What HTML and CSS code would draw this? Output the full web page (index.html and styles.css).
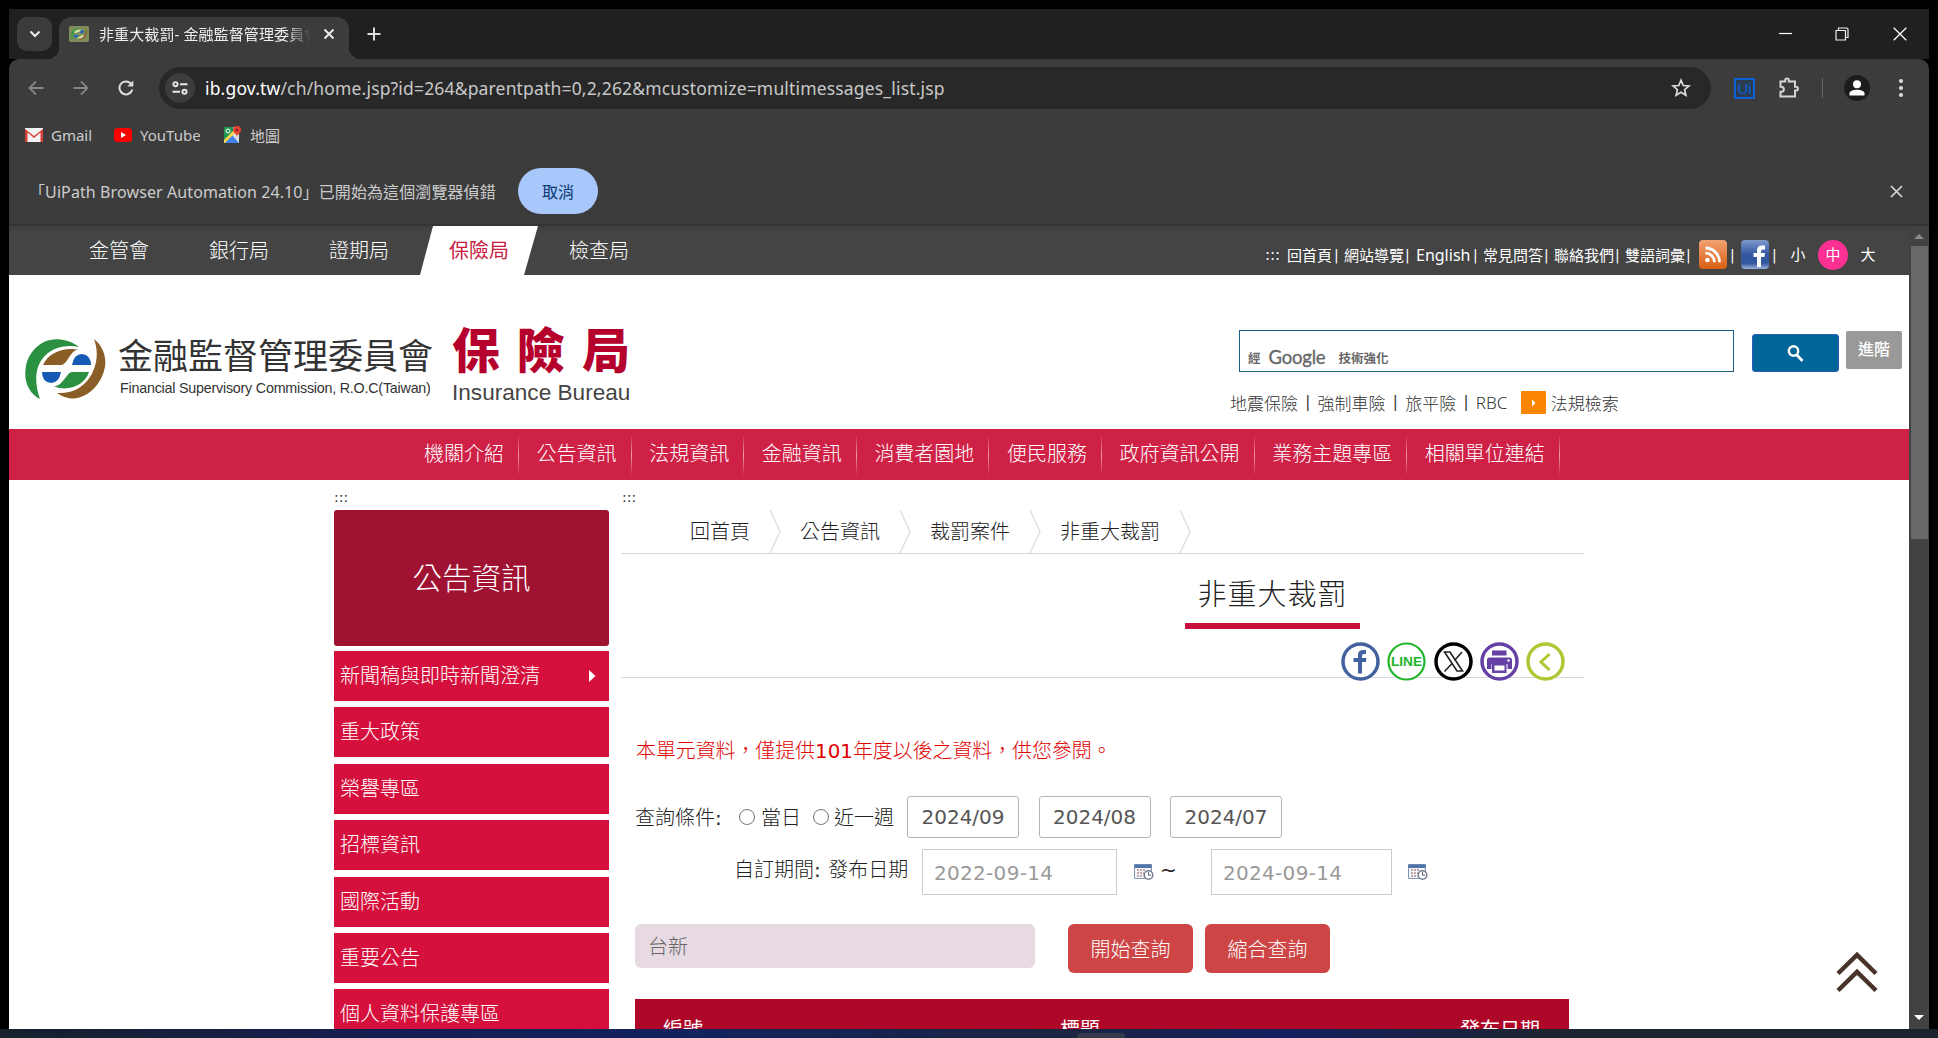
FILE: index.html
```html
<!DOCTYPE html>
<html lang="zh-TW">
<head>
<meta charset="utf-8">
<title>非重大裁罰- 金融監督管理委員會保險局</title>
<link rel="stylesheet" href="styles.css">
</head>
<body>
<div class="window">
  <header class="tabstrip">
    <div class="tab-search"><svg width="12" height="8" viewBox="0 0 12 8"><path d="M1.5 1.5 6 6l4.5-4.5" fill="none" stroke="#e8e8e8" stroke-width="2.2"/></svg></div>
    <div class="tab">
      <svg class="favicon" width="20" height="16" viewBox="0 0 20 16"><rect width="20" height="16" rx="2" fill="#7f8d5c"/><path d="M3.500 14C0 8 4 1 11 2.500 6 4 3.500 8 3.500 14Z" fill="#2f9a4a"/><path d="M17 2.500c3 6-2 12-8 11.500 5-2 8-5 8-11.500Z" fill="#8a5a26"/><path d="M5 7c1-4 5-4 8-3-3 1-3 3-8 3ZM15 9c-1 4-4 4-8 3 4 0 3-3 8-3Z" fill="#cfe0a0"/><path d="M10.500 7q1-3 3-3 2 .5 1.500 3zM5 9h4.500q-1 3-2.500 3-2 0-2-3z" fill="#1f66c0"/></svg>
      <span class="tab-title">非重大裁罰- 金融監督管理委員會</span>
      <svg class="tab-close" width="12" height="12" viewBox="0 0 12 12"><path d="m1.500 1.500 9 9m0-9-9 9" stroke="#ececec" stroke-width="1.900"/></svg>
    </div>
    <svg class="new-tab" width="14" height="14" viewBox="0 0 14 14"><path d="M7 .5v13M.5 7h13" stroke="#ddd" stroke-width="2"/></svg>
    <div class="win-controls">
      <svg width="14" height="14" viewBox="0 0 14 14"><path d="M0 6.500h13" stroke="#fff" stroke-width="1.200"/></svg>
      <svg width="14" height="14" viewBox="0 0 14 14"><path d="M1 3.500h9.500v9.500H1zM3.500 3.500V1h8q1.500 0 1.500 1.500v8h-2.500" fill="none" stroke="#eee" stroke-width="1.200"/></svg>
      <svg width="14" height="14" viewBox="0 0 14 14"><path d="m.7.700 12.600 12.600m0-12.600L.7 13.300" stroke="#fff" stroke-width="1.300"/></svg>
    </div>
  </header>

  <div class="toolbar">
    <svg class="nav-back" width="16" height="16" viewBox="0 0 16 16"><path d="M15.500 8H2M8 1.500 1.500 8 8 14.500" fill="none" stroke="#858585" stroke-width="1.800"/></svg>
    <svg class="nav-fwd" width="16" height="16" viewBox="0 0 16 16"><path d="M.5 8H14M8 1.500 14.500 8 8 14.500" fill="none" stroke="#858585" stroke-width="1.800"/></svg>
    <svg class="nav-reload" width="16" height="16" viewBox="0 0 16 16"><path d="M14.300 9.500A6.500 6.500 0 1 1 12.800 3.500L14.500 5.400" fill="none" stroke="#ddd" stroke-width="2"/><path d="M15.300.500v6h-6z" fill="#ddd"/></svg>
    <div class="omnibox">
      <span class="site-info"><svg width="16" height="14" viewBox="0 0 16 14"><g fill="none" stroke="#e8e8e8" stroke-width="1.900"><circle cx="3.500" cy="3.200" r="2.100"/><circle cx="12.500" cy="10.800" r="2.100"/><path d="M8 3.200h7.500M.5 10.800H8"/></g></svg></span>
      <span class="url"><b>ib.gov.tw</b>/ch/home.jsp?id=264&amp;parentpath=0,2,262&amp;mcustomize=multimessages_list.jsp</span>
      <svg class="star" width="20" height="20" viewBox="0 0 20 20"><path d="m10 2.200 2.200 5.300 5.700.5-4.300 3.700 1.300 5.600L10 14.300l-4.900 3 1.300-5.600L2.100 8l5.700-.5z" fill="none" stroke="#ddd" stroke-width="1.700"/></svg>
    </div>
    <div class="ext">Ui</div>
    <svg class="puzzle" width="22" height="22" viewBox="0 0 22 22"><path d="M2.500 4.500h4.700V3.400a1.800 1.800 0 0 1 3.600 0v1.100H17v5.300h1a1.900 1.900 0 0 1 0 3.800h-1v6H2.500v-4.800h.8a2.500 2.500 0 0 0 0-5.100h-.8z" fill="none" stroke="#d5d5d5" stroke-width="2"/></svg>
    <i class="tool-sep"></i>
    <span class="avatar"><svg width="16" height="16" viewBox="0 0 16 16"><circle cx="8" cy="4.200" r="4" fill="#fff"/><path d="M.5 15.500v-2.300C.5 8.500 15.500 8.500 15.500 13.200v2.300z" fill="#fff"/></svg></span>
    <svg class="dots" width="4" height="18" viewBox="0 0 4 18"><g fill="#ddd"><circle cx="2" cy="2" r="2"/><circle cx="2" cy="9" r="2"/><circle cx="2" cy="16" r="2"/></g></svg>
  </div>

  <div class="bookmarks">
    <svg width="18" height="14" viewBox="0 0 18 14"><path d="M0 0h18v14H0z" fill="#f2f2f2"/><path d="M0 14V1l9 7 9-7v13h-2.500V4.500L9 10 2.500 4.500V14z" fill="#d93f35"/></svg>
    <span class="bm-gmail">Gmail</span>
    <svg width="18" height="14" viewBox="0 0 18 14"><rect width="18" height="14" rx="3.500" fill="#f00"/><path d="m7 4 5 3-5 3z" fill="#fff"/></svg>
    <span class="bm-yt">YouTube</span>
    <svg width="19" height="18" viewBox="0 0 19 18"><path d="M1 1h15v16H1z" fill="#ddd"/><path d="M1 1h9v5L1 15z" fill="#219653"/><path d="m1 17 8-8 7 8z" fill="#3f82ed"/><path d="m1 14 13-13 2 2L2 17H1z" fill="#f9d64a"/><path d="m3 17 6-6 6 6z" fill="#3f82ed"/><circle cx="5" cy="5" r="2" fill="none" stroke="#fff"/><path d="M14 11c0-3-4-4-4-7a4 4 0 0 1 8 0c0 3-4 4-4 7z" fill="#e74133"/><circle cx="14" cy="4" r="1.300" fill="#80201a"/></svg>
    <span class="bm-map">地圖</span>
  </div>

  <div class="infobar">
    <span class="info-text">「UiPath Browser Automation 24.10」已開始為這個瀏覽器偵錯</span>
    <button class="cancel">取消</button>
    <svg class="info-close" width="13" height="13" viewBox="0 0 13 13"><path d="m1 1 11 11m0-11L1 12" stroke="#d8d8d8" stroke-width="1.700"/></svg>
  </div>

  <div class="viewport">
    <main class="page">
      <div class="topbar">
        <nav class="bureaus"><a>金管會</a><a>銀行局</a><a>證期局</a><a class="current">保險局</a><a>檢查局</a></nav>
        <div class="toplinks">
          <span class="t-dots">:::</span><a class="l3">回首頁</a><i>|</i><a>網站導覽</a><i>|</i><a class="en">English</a><i>|</i><a>常見問答</a><i>|</i><a>聯絡我們</a><i>|</i><a>雙語詞彙</a><i>|</i>
          <svg class="rss" width="28" height="29" viewBox="0 0 28 29"><defs><linearGradient id="o" x2="0" y2="1"><stop stop-color="#f2a274"/><stop offset="1" stop-color="#d95f14"/></linearGradient></defs><rect width="28" height="29" rx="4" fill="url(#o)"/><circle cx="8.500" cy="20" r="2.300" fill="#fff"/><path d="M6.500 13.200a9 9 0 0 1 9 9M6.500 8a14 14 0 0 1 14 14.200" fill="none" stroke="#fff" stroke-width="2.800"/></svg>
          <i>|</i>
          <svg class="fb" width="28" height="29" viewBox="0 0 28 29"><defs><linearGradient id="b" x2="0" y2="1"><stop stop-color="#7d98cc"/><stop offset=".5" stop-color="#3358a0"/><stop offset=".8" stop-color="#3358a0"/><stop offset="1" stop-color="#9db4dd"/></linearGradient></defs><rect width="28" height="29" rx="4" fill="url(#b)"/><path d="M16 27V17h-3.500v-4H16v-2.500q0-5 5-5h3v4h-2q-2 0-2 2V13h4l-.6 4H20v10z" fill="#fff"/></svg>
          <i>|</i>
          <a class="size">小</a><a class="size on">中</a><a class="size">大</a>
        </div>
      </div>

      <div class="masthead">
        <svg class="emblem" width="81" height="60" viewBox="0 0 81 60"><path d="M15 60C5 55-1 44 .5 31 2 13 16 .5 31 .3 41 0 49 4 54 8 40 5 26 9 18 19 9 30 10 46 15 60Z" fill="#2b9140"/><path d="M69 0C78 7 83 20 79 32 74 49 60 60 46 59.500 41 59 36 57 32 54 46 55 58 49 65 38 72 27 74 13 69 0Z" fill="#8b5e28"/><path d="M18 26C23 14 38 8 53 10.500 45 12 43 24 37 26Z" fill="#8b5e28"/><path d="M64 33C60 46 44 53 29 47.500 39 46 41 34 47 33Z" fill="#2b9140"/><path d="M47 26Q49 15 57 15 66 16 66 26ZM17 33H36Q34 44 26 44 17 43 17 33Z" fill="#155ab5"/></svg>
        <div class="brand"><div class="brand-zh">金融監督管理委員會</div><div class="brand-en">Financial Supervisory Commission, R.O.C(Taiwan)</div></div>
        <div class="bureau"><div class="bureau-zh">保險局</div><div class="bureau-en">Insurance Bureau</div></div>
        <div class="search">
          <div class="search-row">
            <div class="search-box"><span class="g-small">經</span><span class="g-logo">Google</span><span class="g-small">技術強化</span></div>
            <div class="search-btn"><svg width="17" height="17" viewBox="0 0 17 17"><circle cx="6.500" cy="6" r="4.700" fill="none" stroke="#fff" stroke-width="2.400"/><path d="m10 10 5.500 6" stroke="#fff" stroke-width="2.700"/></svg></div>
            <div class="advanced">進階</div>
          </div>
          <div class="hotlinks"><a>地震保險</a><i>|</i><a>強制車險</a><i>|</i><a>旅平險</a><i>|</i><a class="rbc">RBC</a><svg width="25" height="23" viewBox="0 0 25 23"><rect width="25" height="23" rx="1" fill="#fb8500"/><path d="M11 8.500 14.500 12 11 15.500z" fill="#fff"/></svg><a>法規檢索</a></div>
        </div>
      </div>

      <nav class="mainnav"><a>機關介紹</a><a>公告資訊</a><a>法規資訊</a><a>金融資訊</a><a>消費者園地</a><a>便民服務</a><a>政府資訊公開</a><a>業務主題專區</a><a>相關單位連結</a></nav>

      <div class="content">
        <aside class="side">
          <div class="anchor">:::</div>
          <div class="side-title">公告資訊</div>
          <ul>
            <li>新聞稿與即時新聞澄清<svg width="7" height="12" viewBox="0 0 7 12"><path d="m0 0 6.500 6L0 12z" fill="#fff"/></svg></li>
            <li>重大政策</li><li>榮譽專區</li><li>招標資訊</li><li>國際活動</li><li>重要公告</li><li>個人資料保護專區</li>
          </ul>
        </aside>
        <section class="main">
          <div class="anchor">:::</div>
          <div class="crumbs">
            <a>回首頁</a><svg width="12" height="43" viewBox="0 0 12 43"><path d="M1 0 11 21.500 1 43" fill="none" stroke="#e0e0e0" stroke-width="1.500"/></svg>
            <a>公告資訊</a><svg width="12" height="43" viewBox="0 0 12 43"><path d="M1 0 11 21.500 1 43" fill="none" stroke="#e0e0e0" stroke-width="1.500"/></svg>
            <a>裁罰案件</a><svg width="12" height="43" viewBox="0 0 12 43"><path d="M1 0 11 21.500 1 43" fill="none" stroke="#e0e0e0" stroke-width="1.500"/></svg>
            <a>非重大裁罰</a><svg width="12" height="43" viewBox="0 0 12 43"><path d="M1 0 11 21.500 1 43" fill="none" stroke="#e0e0e0" stroke-width="1.500"/></svg>
          </div>
          <div class="heading">
            <h1>非重大裁罰</h1>
            <div class="share">
              <svg width="39" height="39" viewBox="0 0 39 39"><circle cx="19.500" cy="19.500" r="17.500" fill="#fff" stroke="#43619f" stroke-width="3.500"/><path d="M17 31.500V20h-4.500v-4H17v-3q0-5 5.500-5H25v4h-2.200q-1.800 0-1.800 2v2h4.500l-.6 4H21v11.500z" fill="#43619f"/></svg>
              <svg class="s-line" width="39" height="39" viewBox="0 0 39 39"><circle cx="19.500" cy="19.500" r="18" fill="#fff" stroke="#22b52a" stroke-width="2.200"/><text x="19.500" y="24" text-anchor="middle" textLength="31" lengthAdjust="spacingAndGlyphs">LINE</text></svg>
              <svg class="s-x" width="39" height="39" viewBox="0 0 39 39"><circle cx="19.500" cy="19.500" r="17.500" fill="#fff" stroke="#000" stroke-width="3.500"/><path d="M10.500 10h5.500l12.500 19H23zM28 10l-7.500 8.500M18 21.500 10.500 29.500" fill="none" stroke="#222" stroke-width="1.600"/></svg>
              <svg class="s-print" width="39" height="39" viewBox="0 0 39 39"><circle cx="19.500" cy="19.500" r="17.500" fill="#fff" stroke="#6541a5" stroke-width="3.500"/><path d="M12 8.500h14.500v5H12zM9.500 15.500h20q2.500 0 2.500 2.500v9h-4.500v-5h-16v5H7v-9q0-2.500 2.500-2.500zM12 21.500h14.500v9.500H12z" fill="#6541a5"/><path d="M14.500 23.500h10v5h-10z" fill="#fff"/><circle cx="28.500" cy="18.500" r="1.200" fill="#fff"/></svg>
              <svg class="s-back" width="39" height="39" viewBox="0 0 39 39"><circle cx="19.500" cy="19.500" r="17.500" fill="#fff" stroke="#b0c632" stroke-width="3.500"/><path d="m23.500 12-8.500 8 8.500 8" fill="none" stroke="#b0c632" stroke-width="3"/></svg>
            </div>
          </div>
          <p class="notice">本單元資料，僅提供<b>101</b>年度以後之資料，供您參閱。</p>
          <div class="row quick"><span class="lbl">查詢條件<em>:</em></span><i class="radio"></i><span class="r1">當日</span><i class="radio"></i><span class="r2">近一週</span><button>2024/09</button><button>2024/08</button><button>2024/07</button></div>
          <div class="row period"><span class="plabel">自訂期間<em>:</em> 發布日期</span><div class="date d1">2022-09-14</div>
            <svg class="cal" width="20" height="17" viewBox="0 0 20 17"><path d="M.5.500h17v14H.5z" fill="#f4f6fb" stroke="#8495b5"/><path d="M.5.500h17v3.500H.5z" fill="#4e74aa"/><path d="M3 6h9M3 9h7M3 12h6" stroke="#b58c8c" stroke-width="1.300" stroke-dasharray="2 1"/><circle cx="14.500" cy="11" r="4.300" fill="#fff" stroke="#777f90" stroke-width="1.600"/><path d="M14.500 8v3.200H17" fill="none" stroke="#556"/></svg>
            <span class="tilde">~</span><div class="date d2">2024-09-14</div>
            <svg class="cal" width="20" height="17" viewBox="0 0 20 17"><path d="M.5.500h17v14H.5z" fill="#f4f6fb" stroke="#8495b5"/><path d="M.5.500h17v3.500H.5z" fill="#4e74aa"/><path d="M3 6h9M3 9h7M3 12h6" stroke="#b58c8c" stroke-width="1.300" stroke-dasharray="2 1"/><circle cx="14.500" cy="11" r="4.300" fill="#fff" stroke="#777f90" stroke-width="1.600"/><path d="M14.500 8v3.200H17" fill="none" stroke="#556"/></svg>
          </div>
          <div class="row submit"><div class="keyword">台新</div><button>開始查詢</button><button>縮合查詢</button></div>
          <div class="thead"><span>編號</span><span>標題</span><span>發布日期</span></div>
        </section>
      </div>
      <svg class="to-top" width="42" height="42" viewBox="0 0 42 42"><path d="M2 22.500 21 4l19 18.500M2 39.500 21 21l19 18.500" fill="none" stroke="#4a332b" stroke-width="4.500"/></svg>
    </main>
    <div class="scrollbar"><svg width="10" height="5" viewBox="0 0 10 5"><path d="M5 0l5 5H0z" fill="#8c8c8c"/></svg><div class="thumb"></div><svg width="10" height="5" viewBox="0 0 10 5"><path d="M0 0h10L5 5z" fill="#fff"/></svg></div>
  </div>
</div>
<div class="taskbar"><i></i></div>
</body>
</html>
```
FILE: styles.css
```css
* { box-sizing: border-box; }
body { margin: 0; width: 1938px; height: 1038px; overflow: hidden; background: #000; font-family: "Noto Sans", "Noto Sans CJK TC", sans-serif; font-weight: 400; }
svg { display: block; flex: none; }
i, em { font-style: normal; }
button { font: inherit; border: 0; padding: 0; margin: 0; }
.window { margin: 0 9px; padding-top: 9px; height: 1029px; display: flex; flex-direction: column; background: #000; overflow: hidden; }
.window span, .window a { white-space: nowrap; }

/* browser chrome */
.tabstrip { height: 50px; flex: none; background: #202020; display: flex; align-items: flex-start; }
.tab-search { width: 35px; height: 34px; margin: 8px 0 0 8px; border-radius: 10px; background: #3b3b3b; display: flex; align-items: center; justify-content: center; }
.tab { position: relative; width: 290px; height: 42px; margin: 8px 0 0 7px; background: #3c3c3c; border-radius: 12px 12px 0 0; display: flex; align-items: flex-start; }
.tab::before, .tab::after { content: ""; position: absolute; bottom: 0; width: 12px; height: 12px; }
.tab::before { left: -12px; background: radial-gradient(circle at 0 0, transparent 12px, #3c3c3c 12.500px); }
.tab::after { right: -12px; background: radial-gradient(circle at 100% 0, transparent 12px, #3c3c3c 12.500px); }
.favicon { margin: 9px 0 0 10px; }
.tab-title { margin: 5px 0 0 10px; width: 211px; overflow: hidden; font-size: 15px; line-height: 25px; letter-spacing: .1px; color: #eee; -webkit-mask-image: linear-gradient(90deg, #000 187px, transparent 211px); }
.tab-close { margin: 11px 0 0 13px; }
.new-tab { margin: 18px 0 0 18px; }
.win-controls { margin: 18px 22px 0 auto; display: flex; gap: 42px; }
.win-controls svg:last-child { margin-left: 2px; }
.toolbar { height: 58px; flex: none; background: #3c3c3c; border-radius: 10px 10px 0 0; display: flex; align-items: center; }
.nav-back { margin-left: 19px; }
.nav-fwd, .nav-reload { margin-left: 29px; }
.omnibox { width: 1552px; height: 42px; margin-left: 25px; border-radius: 21px; background: #282828; display: flex; align-items: center; }
.site-info { width: 30px; height: 30px; margin-left: 6px; border-radius: 50%; background: #3c3c3c; display: flex; align-items: center; justify-content: center; }
.url { margin-left: 10px; font-size: 17.500px; letter-spacing: .165px; color: #c8c8c8; }
.url b { font-weight: 400; color: #fff; }
.star { margin: 0 20px 0 auto; }
.ext { width: 21px; height: 21px; margin-left: 23px; border: 2px solid #0b62d6; color: #0b62d6; background: #2b3c50; font: 15px/18px "Liberation Sans", sans-serif; text-align: center; }
.puzzle { margin-left: 23px; }
.tool-sep { width: 1px; height: 20px; margin-left: 22px; background: #666; }
.avatar { width: 26px; height: 26px; margin-left: 21px; border-radius: 50%; background: #1c1c1c; display: flex; align-items: center; justify-content: center; }
.dots { margin-left: 29px; }
.bookmarks { height: 38px; flex: none; background: #3c3c3c; display: flex; align-items: center; padding: 0 0 2px 16px; font-size: 15px; color: #ccc; }
.bookmarks span { margin-left: 8px; }
.bm-gmail { width: 63px; }
.bm-yt { width: 83px; }
.infobar { height: 71px; flex: none; background: #3c3c3c; border-bottom: 2px solid #343434; display: flex; align-items: center; padding-top: 3px; font-size: 16px; color: #ccc; }
.info-text { width: 490px; margin-left: 20px; letter-spacing: .1px; }
.cancel { width: 80px; height: 46px; margin-left: -1px; border-radius: 23px; background: #a8c7fa; color: #0b3a75; font-size: 16px; }
.info-close { margin: 0 26px 0 auto; }

/* page */
.viewport { flex: 1; min-height: 0; display: flex; }
.page { position: relative; width: 1900px; height: 803px; overflow: hidden; background: #fff; font-family: "DejaVu Sans", "Noto Sans CJK TC", sans-serif; font-weight: 300; }
.topbar { height: 49px; background: linear-gradient(#3d3d3d, #444 6px); display: flex; color: #fff; }
.bureaus { display: flex; margin-left: 63px; }
.bureaus a { width: 120px; padding-left: 17px; font-size: 20px; line-height: 50px; }
.bureaus .current { margin-left: -13px; width: 133px; padding-left: 30px; color: #c91a42; background: #fff; clip-path: polygon(14px 0, 119px 0, 105px 100%, 1px 100%); font-weight: 400; }
.toplinks { margin-left: auto; width: 644px; display: flex; align-items: center; font-size: 15px; padding-top: 8px; font-weight: 400; }
.toplinks a { width: 60px; }
.toplinks i { width: 10px; padding-left: 1px; margin-right: 1px; font-size: 14px; }
.toplinks .t-dots { width: 22px; }
.toplinks .l3 { width: 46px; }
.toplinks .en { width: 57px; padding-left: 1px; font: 16px "Noto Sans", sans-serif; }
.toplinks .rss { margin-left: 3px; }
.toplinks .fb { margin-left: 1px; }
.toplinks svg + i { margin-left: 2px; }
.toplinks .size { width: 30px; height: 30px; line-height: 30px; text-align: center; margin-left: 5px; border-radius: 50%; }
.toplinks i + .size { margin-left: 1px; }
.toplinks .on { background: #fd3094; }
.masthead { height: 154px; display: flex; }
.emblem { margin: 64px 0 0 16px; }
.brand { width: 346px; padding: 57px 0 0 12px; }
.brand-zh { font-size: 35px; line-height: 50px; font-weight: 400; color: #333; white-space: nowrap; }
.brand-en { font: 14.300px/17px "Liberation Sans", sans-serif; letter-spacing: -.22px; color: #333; padding: 0 0 0 2px; margin-top: -2px; white-space: nowrap; }
.bureau { width: 200px; padding-top: 47px; }
.bureau-zh { font-size: 48px; line-height: 58px; letter-spacing: 17px; font-weight: 900; color: #b5002d; white-space: nowrap; }
.bureau-en { font: 22.600px/27px "Liberation Sans", sans-serif; color: #444; white-space: nowrap; margin-top: -1px; }
.search { margin-left: auto; width: 679px; padding-top: 55px; }
.search-row { display: flex; height: 42px; margin-left: 9px; }
.search-box { width: 495px; height: 42px; border: 1px solid #1b5f80; padding: 12px 0 0 8px; display: flex; align-items: center; color: #666; font-weight: 700; }
.g-small { font-size: 12.500px; }
.g-logo { width: 78px; padding-left: 8px; font: 18.500px Lato, sans-serif; letter-spacing: -.2px; -webkit-text-stroke: .3px #666; }
.search-btn { width: 87px; height: 38px; margin: 4px 0 0 18px; background: #069; border: 1px solid #2f5bb7; border-radius: 3px; display: flex; align-items: center; justify-content: center; }
.advanced { width: 56px; height: 38px; margin: 1px 0 0 7px; background: #999; border-radius: 2px; color: #fff; font-size: 16px; font-weight: 500; line-height: 37px; text-align: center; }
.hotlinks { display: flex; align-items: center; height: 30px; margin-top: 15px; font-size: 17px; color: #333; }
.hotlinks i { width: 19.600px; text-align: center; font-size: 15px; font-weight: 400; }
.hotlinks .rbc { width: 45px; font-family: "Noto Sans", sans-serif; }
.hotlinks svg { margin-right: 5px; }
.mainnav { height: 51px; background: #cf2146; color: #fff; display: flex; align-items: center; padding-left: 397px; font-size: 20px; }
.mainnav a { height: 40px; line-height: 39px; padding: 0 14px 0 17.600px; border-right: 1px solid #e88aa0; border-image: linear-gradient(#cf2146, #ec9cb0, #cf2146) 1; }
.mainnav a:first-child { padding-left: 18px; }
.content { display: flex; }
.side { width: 275px; margin-left: 325px; }
.anchor { height: 30px; font-size: 14px; line-height: 35px; color: #333; font-weight: 400; }
.main .anchor { padding-left: 1px; }
.side-title { height: 136px; border-radius: 3px; background: #a01232; color: #fff; font-size: 29.500px; line-height: 138px; text-align: center; }
.side ul { list-style: none; margin: 5px 0 0; padding: 0; display: grid; gap: 6.400px; }
.side li { height: 50px; padding: 0 13px 0 6px; background: #d5103c; color: #fff; font-size: 20px; line-height: 50px; display: flex; align-items: center; justify-content: space-between; }
.main { width: 963px; margin-left: 12px; }
.crumbs { height: 44px; border-bottom: 1px solid #d8d8d8; display: flex; padding-left: 69px; font-size: 20px; line-height: 45px; color: #222; }
.crumbs svg { margin: 0 19px 0 19px; }
.heading { height: 124px; border-bottom: 1px solid #d8d8d8; }
h1 { width: 175px; height: 75px; margin: 0 0 0 564px; border-bottom: 6px solid #c8103c; font-size: 29px; letter-spacing: 1px; line-height: 83px; font-weight: 300; color: #222; text-align: center; white-space: nowrap; }
.share { display: flex; margin: 13px 0 0 720px; height: 39px; }
.s-line { margin-left: 7px; }
.s-line text { font: bold 13px "Liberation Sans", sans-serif; fill: #22b52a; }
.s-x { margin-left: 8px; }
.s-print, .s-back { margin-left: 7px; }
.notice { margin: 59px 0 0 15px; height: 30px; line-height: 30px; font-size: 19.900px; color: #e00000; white-space: nowrap; }
.row { display: flex; color: #222; font-size: 20px; }
.row em { display: inline-block; width: 8px; font-weight: 400; }
.quick { margin: 29px 0 0 14px; height: 42px; align-items: center; }
.lbl { width: 104px; }
.quick .lbl, .quick .r1, .quick .r2 { padding-bottom: 1px; }
.radio { width: 16px; height: 16px; border: 1.500px solid #777; border-radius: 50%; background: #fff; }
.r1 { width: 52px; margin-left: 6px; }
.r2 { width: 73px; margin-left: 5px; }
.quick button { width: 112px; height: 42px; margin-right: 19.500px; background: #fff; border: 1.500px solid #b5b5b5; border-radius: 3px; font-size: 20px; font-weight: 400; color: #555; }
.period { margin: 11px 0 0 113px; height: 46px; align-items: center; }
.plabel { width: 188px; padding-bottom: 7px; }
.date { height: 46px; border: 1.500px solid #ccc; padding-left: 11px; font-size: 20px; line-height: 46px; letter-spacing: .3px; color: #999; font-weight: 400; }
.d1 { width: 195px; margin-right: 17px; }
.d2 { width: 181px; margin-right: 16px; }
.tilde { width: 51px; margin-left: 6px; padding-bottom: 4px; font-weight: 400; }
.submit { margin: 29px 0 0 14px; height: 49px; }
.keyword { width: 400px; height: 44px; margin-right: 33px; padding-left: 13px; border-radius: 6px; background: #e7dae2; color: #666; line-height: 46px; }
.submit button { width: 125px; height: 49px; margin-right: 12px; border-radius: 6px; background: #cd4545; color: #fff; font-size: 20px; font-weight: 300; }
.thead { width: 934px; height: 60px; margin: 26px 0 0 14px; background: #ae0728; color: #fff; font-size: 20px; line-height: 62px; display: flex; padding-left: 28px; font-weight: 400; }
.thead span:nth-child(1) { width: 397px; }
.thead span:nth-child(2) { width: 400px; }
.to-top { position: absolute; left: 1827px; top: 725px; }
.scrollbar { width: 20px; background: #424242; display: flex; flex-direction: column; align-items: center; padding: 8px 0 9px; }
.thumb { width: 17px; height: 293px; margin: 7px 0 auto; background: #686868; }
.taskbar { height: 9px; background: linear-gradient(90deg, #17202c, #141d52 20%, #13225e 35%, #1b2440 55%, #131f60 66%, #1d2430 80%, #1c222e); }
.taskbar i { display: block; position: relative; left: 1077px; top: 4px; width: 48px; height: 8px; border-radius: 5px; background: #35394c; }
```
